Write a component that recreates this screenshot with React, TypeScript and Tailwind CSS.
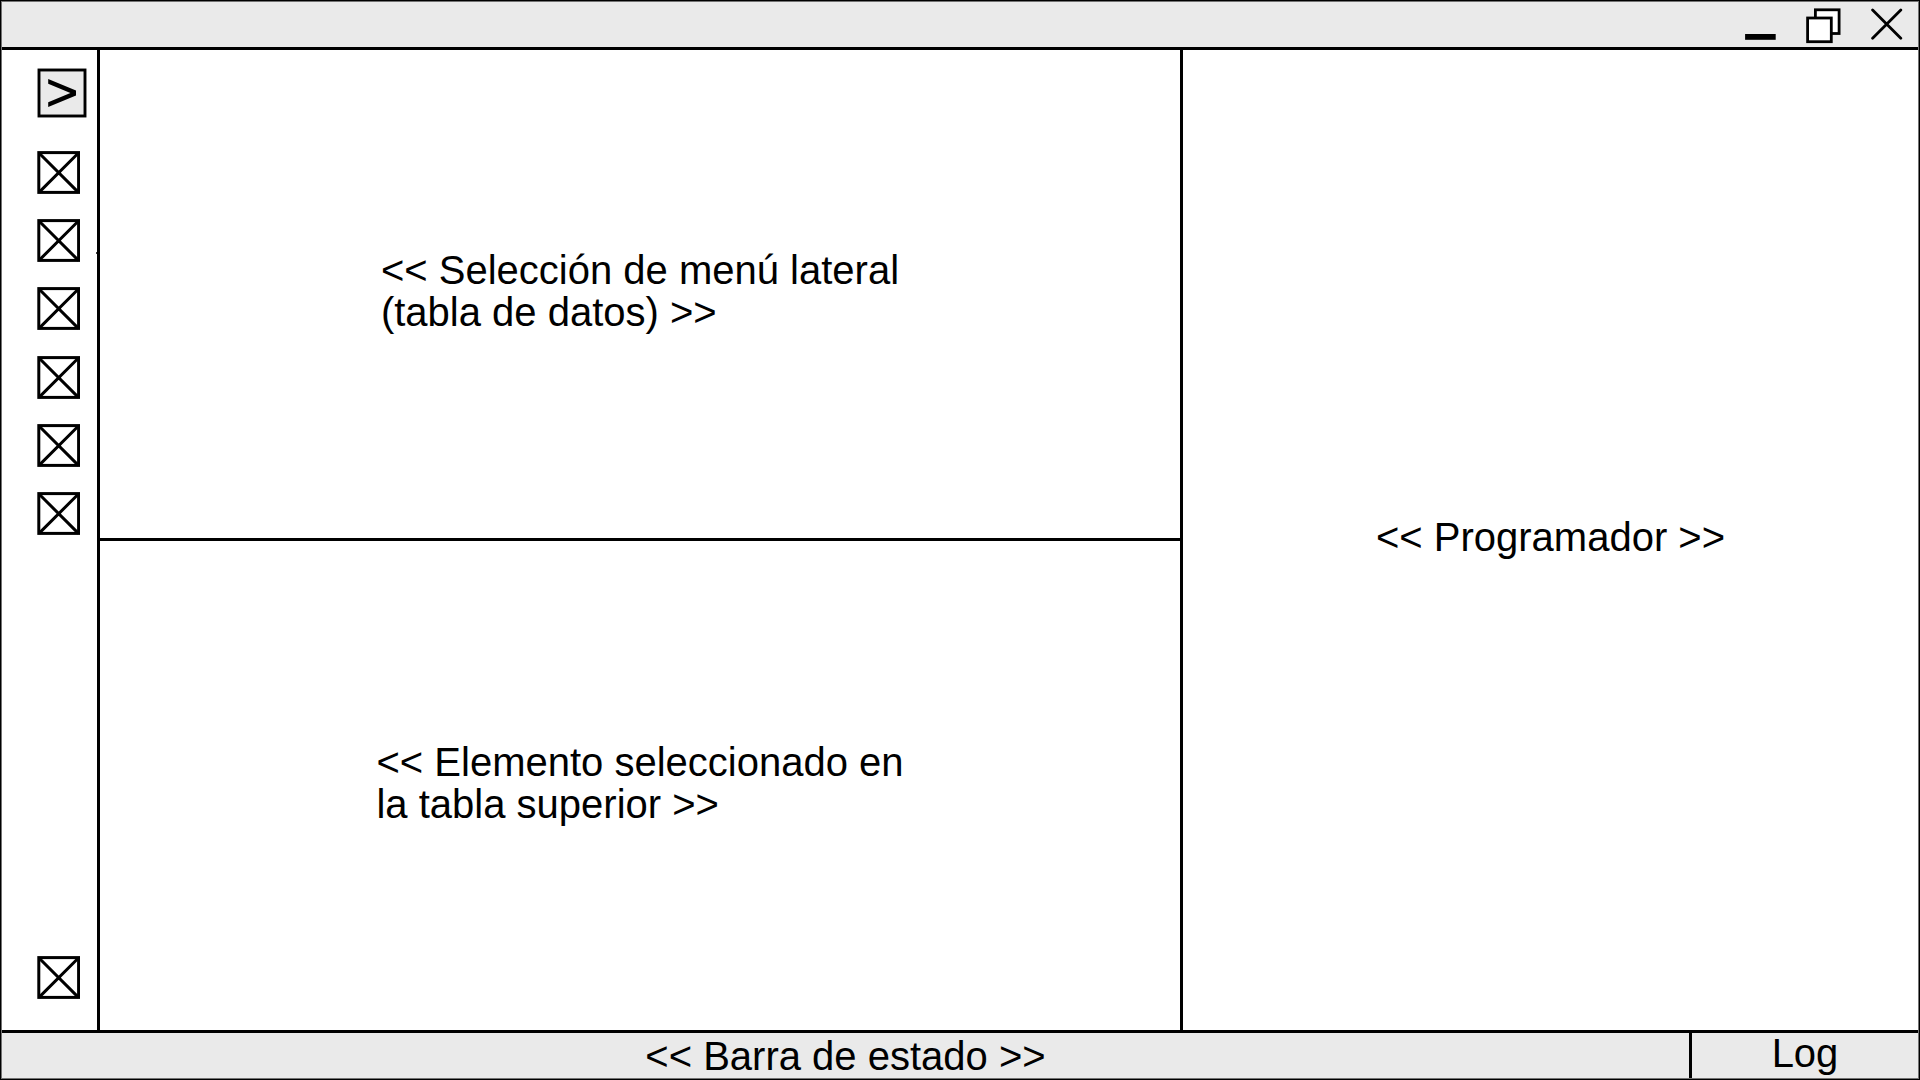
const upperItems = ['Elemento 1', 'Elemento 2', 'Elemento 3'];
const lowerItems = ['Elemento 4', 'Elemento 5', 'Elemento 6'];

function CrossedBox({ label }: { label: string }) {
  return (
    <button type="button" aria-label={label} className="block size-[43px] shrink-0">
      <svg viewBox="0 0 43 43" className="size-full" fill="none" stroke="#000" strokeWidth="3">
        <rect x="1.8" y="1.6" width="39.8" height="39.8" />
        <path d="M2 2 41.4 41.4M41.4 2 2 41.4" />
      </svg>
    </button>
  );
}

function TitleBar() {
  return (
    <header className="flex h-12 shrink-0 items-stretch justify-end gap-[30px] border-b-3 border-black bg-[#eaeaea] pr-[15px]">
      <button type="button" aria-label="Minimizar">
        <svg width="31" height="45" viewBox="0 0 31 45">
          <rect x="0.1" y="32" width="30.6" height="5.8" />
        </svg>
      </button>
      <button type="button" aria-label="Restaurar">
        <svg width="35" height="45" viewBox="0 0 35 45" fill="#fff" stroke="#000" strokeWidth="2.8">
          <rect x="9.4" y="7.8" width="23.7" height="23.7" />
          <rect x="1.6" y="16" width="23.7" height="23.7" />
        </svg>
      </button>
      <button type="button" aria-label="Cerrar">
        <svg width="32" height="45" viewBox="0 0 32 45" stroke="#000" strokeWidth="2.8" strokeLinecap="round">
          <path d="M1.6 8 29.8 36.2M29.8 8 1.6 36.2" />
        </svg>
      </button>
    </header>
  );
}

function Sidebar() {
  return (
    <nav aria-label="Menú lateral" className="relative flex w-[98px] shrink-0 flex-col items-start border-r-3 border-black pt-[18px] pb-[31px] pl-[35px]">
      <button type="button" aria-label="Expandir menú" className="block size-[50px] shrink-0">
        <svg viewBox="0 0 50 50" className="size-full">
          <rect x="2" y="2" width="46" height="46" fill="#eaeaea" stroke="#000" strokeWidth="2.9" />
          <path d="M11.2 11 39 22.6V27.4L11.2 39V34.2L33.4 25 11.2 15.8Z" />
        </svg>
      </button>
      <div className="mt-[33px] flex flex-col gap-[26px]">
        <div className="flex flex-col gap-[25px]">
          {upperItems.map((label) => (
            <CrossedBox key={label} label={label} />
          ))}
        </div>
        <div className="flex flex-col gap-[25px]">
          {lowerItems.map((label) => (
            <CrossedBox key={label} label={label} />
          ))}
        </div>
      </div>
      <div className="mt-auto">
        <CrossedBox label="Configuración" />
      </div>
      <span className="absolute top-[202px] right-0 h-0.5 w-px bg-neutral-700" />
    </nav>
  );
}

export default function App() {
  return (
    <div className="flex min-h-screen flex-col border border-black bg-white font-['Liberation_Sans',Arial,sans-serif] text-[40px] leading-[42px] text-black">
      <div className="flex grow flex-col border border-neutral-500">
        <TitleBar />
        <div className="flex grow">
          <Sidebar />
          <main className="grid grow grid-cols-[1083fr_735fr]">
            <div className="grid grid-rows-[491fr_489fr] border-r-3 border-black">
              <section className="flex items-center justify-center border-b-3 border-black pb-1.5">
                <p>
                  &lt;&lt; Selección de menú lateral
                  <br />
                  (tabla de datos) &gt;&gt;
                </p>
              </section>
              <section className="flex items-center justify-center pb-1.5">
                <p>
                  &lt;&lt; Elemento seleccionado en
                  <br />
                  la tabla superior &gt;&gt;
                </p>
              </section>
            </div>
            <section className="flex items-center justify-center pb-1.5">
              <p>&lt;&lt; Programador &gt;&gt;</p>
            </section>
          </main>
        </div>
        <footer className="flex h-12 shrink-0 border-t-3 border-black bg-[#eaeaea]">
          <p className="flex grow items-center justify-center">&lt;&lt; Barra de estado &gt;&gt;</p>
          <button type="button" className="flex w-[229px] items-center justify-center border-l-3 border-black pb-1.5">
            Log
          </button>
        </footer>
      </div>
    </div>
  );
}
